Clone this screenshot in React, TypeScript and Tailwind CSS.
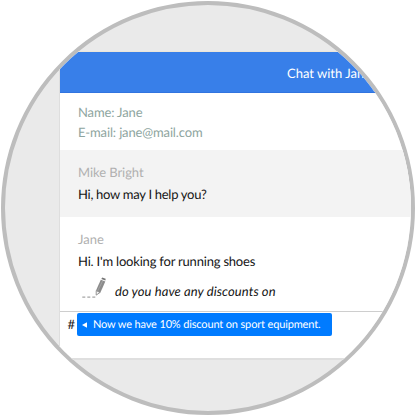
import React from "react";

function PencilIcon() {
  return (
    <svg width="26" height="24" viewBox="0 0 26 24" className="shrink-0">
      <path d="M0.3 20.2h3M5.3 20.2h3M10.3 20.2h3" stroke="#a6a6a6" strokeWidth="1.3" />
      <path d="M19.3 1.9l1-1.4 3.4 1.3-.3 1.8z" fill="#777777" />
      <path d="M18.8 2.7l4.5 1.8-5.1 11.4-4.2-2.4z" fill="#8b8b8b" />
      <path d="M20.6 4l-5 10" stroke="#a8a8a8" strokeWidth="0.8" />
      <path d="M14.2 13.6l3.8 1.9-3.8 2.6z" fill="#f7f7f7" stroke="#8b8b8b" strokeWidth="0.9" />
    </svg>
  );
}

export default function App() {
  return (
    <div className="h-[415px] w-[415px] bg-white p-[0.5px] font-[Lato,sans-serif] [text-rendering:geometricPrecision]">
      <div className="h-full w-full overflow-hidden rounded-full border-4 border-[#bdbdbd] bg-[#eaeaea] pt-[46.5px] pl-[54.5px] whitespace-nowrap">
        <div className="flex h-[309px] w-[420px] flex-col border-t border-b-2 border-l border-t-[#ece6da] border-b-[#dfdfdf] border-l-[#dedede] bg-white">
          <header className="h-[41px] shrink-0 border-b border-[#3174df] bg-[#387fe9] pl-[227px] text-[13px] leading-[42px] text-white">
            Chat with Jane
          </header>
          <section className="h-[57px] shrink-0 pt-[10px] pl-[18px] text-[13px] leading-[19.5px] tracking-[-0.14px] text-[#8ea5a0]">
            <p>Name: Jane</p>
            <p>E-mail: jane@mail.com</p>
          </section>
          <section className="h-[67px] shrink-0 bg-[#f3f3f3] pt-[11px] pl-[18px] text-[13px] leading-[22px] text-[#151515]">
            <p className="tracking-[-0.06px] text-[#b0b0b0]">Mike Bright</p>
            <p className="tracking-[-0.28px]">Hi, how may I help you?</p>
          </section>
          <section className="h-[94px] shrink-0 pt-[11px] pl-[18px] text-[13px] leading-[22px] text-[#151515]">
            <p className="text-[#b0b0b0]">Jane</p>
            <p className="tracking-[-0.2px]">Hi. I'm looking for running shoes</p>
            <div className="flex pt-[5px] pl-[4px]">
              <PencilIcon />
              <p className="pl-[7px] leading-[28px] tracking-[0.09px] italic">do you have any discounts on</p>
            </div>
          </section>
          <footer className="flex min-h-0 flex-1 items-start border-t border-[#cecece] pt-px pl-[7.5px]">
            <span className="w-[9.5px] shrink-0 text-[13px] leading-[22px] text-[#222222]">#</span>
            <div className="flex h-[23px] w-[254.5px] shrink-0 items-center rounded-[2px] bg-[#007bff] pl-[5px] text-[11px] tracking-[-0.15px] text-white">
              <svg width="5" height="6" viewBox="0 0 5 6" className="mr-[6px] shrink-0">
                <path d="M0 3L5 .2v5.6z" fill="white" />
              </svg>
              <span className="pt-[2px]">Now we have 10% discount on sport equipment.</span>
            </div>
          </footer>
        </div>
      </div>
    </div>
  );
}
